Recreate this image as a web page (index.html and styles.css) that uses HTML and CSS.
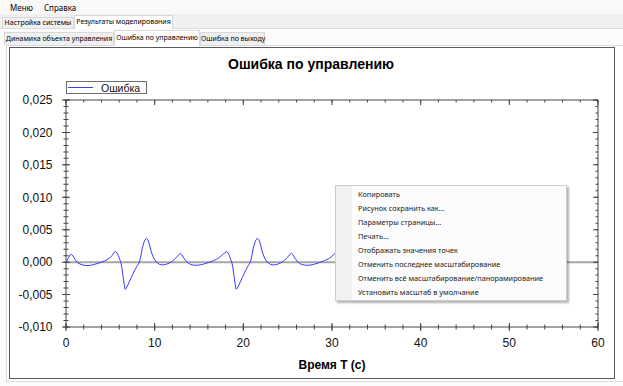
FILE: index.html
```html
<!DOCTYPE html>
<html lang="ru">
<head>
    <meta charset="UTF-8">
    <title>Результаты моделирования</title>
    <link rel="stylesheet" href="styles.css">
</head>
<body>
    <div class="menubar">
        <span>Меню</span>
        <span>Справка</span>
    </div>
    <div class="tabs outer-tabs">
        <div class="tab tab-settings">Настройка системы</div>
        <div class="tab tab-results active">Результаты моделирования</div>
    </div>
    <div class="outer-page">
        <div class="tabs inner-tabs">
            <div class="tab tab-dyn">Динамика объекта управления</div>
            <div class="tab tab-err active">Ошибка по управлению</div>
            <div class="tab tab-out">Ошибка по выходу</div>
        </div>
        <div class="inner-page">
            <div class="chart">
                <svg class="graph" width="607" height="333" viewBox="9 47 607 333">
                    <defs>
                        <!-- один период ошибки, x от пика -->
                        <polyline id="period" points="0,251.5 1.5,252.5 3,255.5 4.5,259.5 5.5,262.5 6.5,267 8,278 9.5,288.5 10,289.3 11,288 13,284 16,277.5 19,271 22,265.5 24,262.5 25.5,256 27,248 29,241 31,238.3 32.5,239.5 34,244 36,252 38.5,258.5 41,262 44,264.3 47,265 51,264.3 55,262.6 58,260.5 61,257.5 63.5,254.5 65,253.3 66.5,254.5 68.5,258 71,261.5 74,263.8 78,265.1 82,265.3 87,264.5 93,262.6 98,260.8 102,258.8 105,256.8 108,254 111,251.5"/>
                    </defs>

                    <rect class="frame" x="9.5" y="47.5" width="605" height="331"/>

                    <text class="title" x="311" y="69">Ошибка по управлению</text>

                    <line class="zero" x1="66" y1="262.2" x2="598" y2="262.2"/>

                    <!-- оси -->
                    <path class="axis" d="M66 99.5 V327 H598.5 M66 100 H598 V327"/>

                    <!-- деления: нижняя ось -->
                    <line class="tick minor-x" x1="65.5" y1="327" x2="599" y2="327"/>
                    <line class="tick major-x" x1="65.5" y1="327" x2="599" y2="327"/>
                    <!-- верхняя ось -->
                    <line class="tick minor-x top-minor" x1="65.5" y1="101.25" x2="599" y2="101.25"/>
                    <line class="tick major-x top-major" x1="65.5" y1="102.5" x2="599" y2="102.5"/>
                    <!-- левая ось -->
                    <line class="tick minor-y" x1="66" y1="99.5" x2="66" y2="328"/>
                    <line class="tick major-y" x1="66" y1="99.5" x2="66" y2="328"/>
                    <!-- правая ось -->
                    <line class="tick minor-y right-minor" x1="596.75" y1="99.5" x2="596.75" y2="328"/>
                    <line class="tick major-y right-major" x1="595.5" y1="99.5" x2="595.5" y2="328"/>

                    <g class="ylabels">
                        <text x="52.5" y="104.3">0,025</text>
                        <text x="52.5" y="136.7">0,020</text>
                        <text x="52.5" y="169.2">0,015</text>
                        <text x="52.5" y="201.6">0,010</text>
                        <text x="52.5" y="234">0,005</text>
                        <text x="52.5" y="266.4">0,000</text>
                        <text x="52.5" y="298.9">-0,005</text>
                        <text x="52.5" y="331.3">-0,010</text>
                    </g>
                    <g class="xlabels">
                        <text x="66" y="346.5">0</text>
                        <text x="154.7" y="346.5">10</text>
                        <text x="243.3" y="346.5">20</text>
                        <text x="332" y="346.5">30</text>
                        <text x="420.7" y="346.5">40</text>
                        <text x="509.3" y="346.5">50</text>
                        <text x="598" y="346.5">60</text>
                    </g>
                    <text class="axis-title" x="332" y="368.5">Время T (с)</text>

                    <!-- кривая -->
                    <polyline class="curve" points="66,262.5 68,258.5 70,255 71.5,254.3 73,256 75,259.5 77,262.3 80,264 84,265.3 88,265.6 93,264.8 98,263.3 101,262.3 105,260.8 109,258.5 112,255.5 114,252.5 115.3,251.5"/>
                    <use class="curve" href="#period" x="115.3"/>
                    <use class="curve" href="#period" x="226.3"/>
                    <use class="curve" href="#period" x="337.3"/>

                    <!-- легенда -->
                    <rect class="legend" x="66.5" y="81.5" width="80" height="12"/>
                    <line class="legend-line" x1="68" y1="87.5" x2="93" y2="87.5"/>
                    <text class="legend-text" x="101" y="91.5">Ошибка</text>
                </svg>

                <div class="context-menu">
                    <div class="menu-item">Копировать</div>
                    <div class="menu-item">Рисунок сохранить как...</div>
                    <div class="menu-item">Параметры страницы...</div>
                    <div class="menu-item">Печать...</div>
                    <div class="menu-item">Отображать значения точек</div>
                    <div class="menu-item">Отменить последнее масштабирование</div>
                    <div class="menu-item">Отменить всё масштабирование/панорамирование</div>
                    <div class="menu-item">Установить масштаб в умолчание</div>
                </div>
            </div>
        </div>
    </div>
</body>
</html>
```

FILE: styles.css
```css
body {
    margin: 0;
    width: 623px;
    height: 386px;
    overflow: hidden;
    background-color: #f0f0f0;
    font-family: "Noto Sans", "Open Sans", sans-serif;
    color: #000;
}
.menubar {
    height: 14px;
    background-color: #f9f9f9;
    display: flex;
    align-items: center;
    gap: 11px;
    padding-left: 10px;
    font-size: 8px;
}
.tabs {
    display: flex;
    align-items: flex-end;
}
.outer-tabs {
    height: 14px;
    padding-left: 2px;
}
.inner-tabs {
    height: 16px;
    padding-left: 4px;
}
.tab {
    box-sizing: border-box;
    height: 11px;
    border: 1px solid #d9d9d9;
    border-bottom: none;
    background-color: #f0f0f0;
    font-size: 7px;
    line-height: 10px;
    text-align: center;
    white-space: nowrap;
}
.tab.active {
    height: 14px;
    line-height: 12px;
    background-color: #fff;
    margin-bottom: -1px;
    position: relative;
    z-index: 1;
}
.inner-tabs .tab {
    height: 13px;
    line-height: 12px;
}
.inner-tabs .tab.active {
    height: 16px;
    line-height: 14px;
}
.tab-settings { width: 72px; }
.tab-results { width: 99px; }
.tab-dyn { width: 110px; }
.tab-err { width: 86px; }
.tab-out { width: 65px; }
.outer-page {
    border-top: 1px solid #dadada;
    background-color: #fbfbfb;
    height: 357px;
}
.inner-page {
    margin-left: 6px;
    width: 612px;
    border: 1px solid #dadada;
    background-color: #fff;
    padding: 1px 3px 1px 2px;
}
.chart {
    position: relative;
    width: 607px;
    height: 333px;
}
.graph {
    display: block;
    font-family: "Liberation Sans", Arial, sans-serif;
}
.frame {
    fill: #fff;
    stroke: #5a5a5a;
}
.title {
    font-size: 14px;
    font-weight: bold;
    text-anchor: middle;
    fill: #000;
}
.zero {
    stroke: #a6a6a6;
    stroke-width: 2;
}
.axis {
    fill: none;
    stroke: #444;
    stroke-width: 1;
}
.tick {
    stroke: #444;
}
.minor-x {
    stroke-width: 5;
    stroke-dasharray: 1 16.733;
}
.major-x {
    stroke-width: 8;
    stroke-dasharray: 1 87.667;
}
.top-minor { stroke-width: 2.5; }
.top-major { stroke-width: 5; }
.minor-y {
    stroke-width: 5;
    stroke-dasharray: 1 5.486;
}
.major-y {
    stroke-width: 8;
    stroke-dasharray: 1 31.43;
}
.right-minor { stroke-width: 2.5; }
.right-major { stroke-width: 5; }
.ylabels text {
    font-size: 12px;
    text-anchor: end;
    fill: #111;
}
.xlabels text {
    font-size: 12px;
    text-anchor: middle;
    fill: #111;
}
.axis-title {
    font-size: 12px;
    font-weight: bold;
    text-anchor: middle;
    fill: #000;
}
.curve {
    fill: none;
    stroke: #3d3dff;
    stroke-width: 1;
    stroke-linejoin: round;
}
.legend {
    fill: #fff;
    stroke: #6e6e6e;
}
.legend-line {
    stroke: #3d3dff;
}
.legend-text {
    font-size: 10.5px;
    fill: #111;
}
.context-menu {
    position: absolute;
    left: 326px;
    top: 138px;
    width: 230px;
    padding: 1px 0;
    border: 1px solid #cccccc;
    background: linear-gradient(to right, #f1f1f1 16px, #fcfcfc 16px);
    box-shadow: 2px 2px 2px rgba(0, 0, 0, 0.3);
}
.menu-item {
    height: 14px;
    line-height: 14px;
    padding-left: 22px;
    font-size: 7.3px;
    color: #1a1a1a;
    white-space: nowrap;
}
```
